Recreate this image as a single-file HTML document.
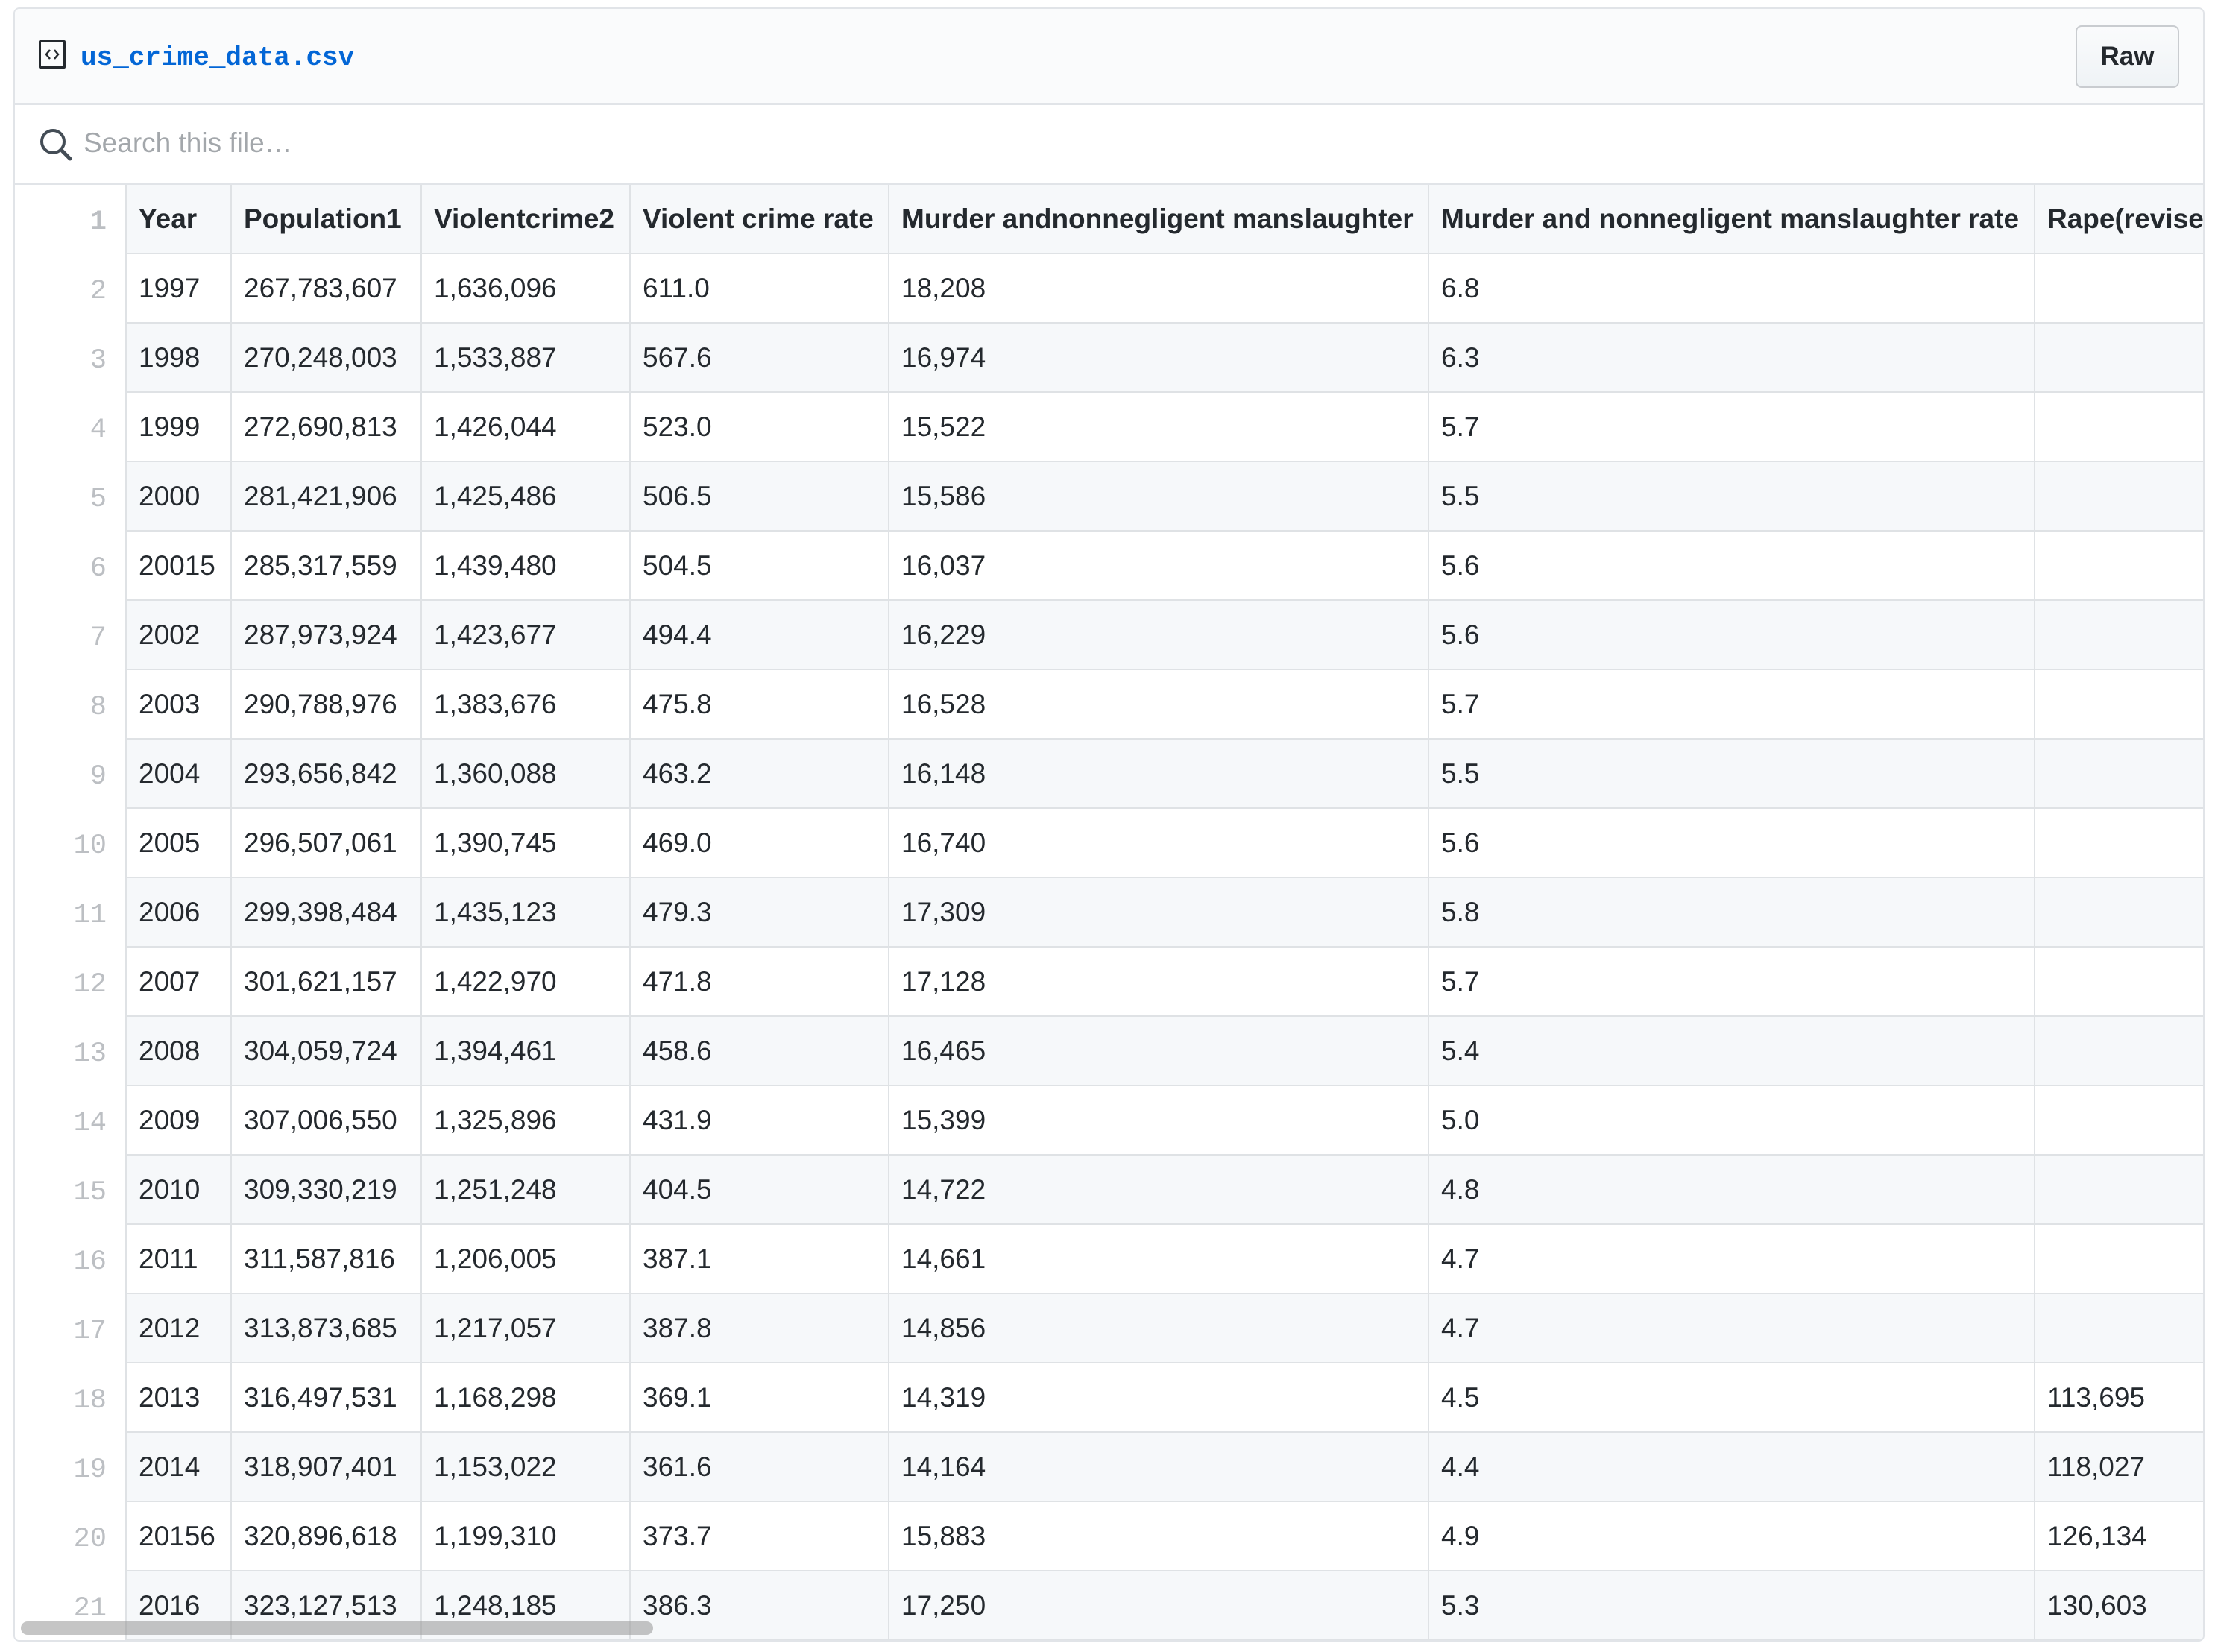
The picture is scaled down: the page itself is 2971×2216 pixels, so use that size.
<!DOCTYPE html>
<html><head><meta charset="utf-8"><style>
html,body{margin:0;padding:0;background:#fff;width:2971px;height:2216px;overflow:hidden;font-family:"Liberation Sans",Arial,sans-serif;color:#24292e}
.box{position:absolute;left:18px;top:10px;width:2935px;height:2188px;border:2px solid #e1e4e8;border-radius:8px;overflow:hidden;background:#fff}
.hdr{position:absolute;left:0;top:0;right:0;height:126px;background:#fafbfc;border-bottom:3px solid #e1e4e8}
.fn{position:absolute;left:88px;top:45px;font-family:"Liberation Mono",monospace;font-weight:bold;font-size:36px;color:#0366d6}
.ico{position:absolute;left:32px;top:42px;border:3px solid #24292e;border-radius:2px;width:30px;height:32px}
.raw{position:absolute;left:2764px;top:22px;width:135px;height:80px;border:2px solid #c9ccd0;border-radius:8px;background:linear-gradient(#fafbfc,#eff3f6);font-weight:bold;font-size:35px;text-align:center;line-height:80px;color:#24292e}
.search{position:absolute;left:0;top:129px;right:0;height:104px;background:#fff}
.ph{position:absolute;left:92px;top:30px;font-size:37px;color:#a3a7ab}
table{position:absolute;left:0;top:233px;border-collapse:collapse;table-layout:fixed;width:3200px}
td{height:91px;border:2px solid #dfe2e5;font-size:37px;line-height:40px;padding:0 0 0 16px;white-space:nowrap;overflow:hidden;vertical-align:middle}
td.n{height:83px;border:none;border-right:2px solid #dfe2e5;text-align:right;padding:8px 25px 0 0;font-family:"Liberation Mono",monospace;font-size:37px;color:#bcbfc3;background:#fff!important}
tr.g td{background:#f6f8fa}
tr.h td{font-weight:bold}
tr:first-child td{border-top:3px solid #e1e4e8}
.sb{position:absolute;left:8px;top:2163px;width:848px;height:18px;border-radius:9px;background:rgba(150,150,150,.55)}
</style></head><body>
<div class="box">
 <div class="hdr">
  <div class="ico"><svg width="30" height="32" viewBox="0 0 30 32" style="position:absolute;left:0;top:0"><path d="M12 10 L7 16 L12 22 M18 10 L23 16 L18 22" stroke="#24292e" stroke-width="2.5" fill="none"/></svg></div>
  <div class="fn">us_crime_data.csv</div>
  <div class="raw">Raw</div>
 </div>
 <div class="search">
  <svg style="position:absolute;left:32px;top:30px" width="48" height="48" viewBox="0 0 48 48"><circle cx="19" cy="19" r="15" stroke="#444d56" stroke-width="4" fill="none"/><path d="M30 30 L42 42" stroke="#444d56" stroke-width="5" stroke-linecap="round"/></svg>
  <div class="ph">Search this file…</div>
 </div>
 <table>
 <colgroup><col style="width:149px"><col style="width:141px"><col style="width:255px"><col style="width:280px"><col style="width:347px"><col style="width:724px"><col style="width:813px"><col style="width:491px"></colgroup>
 <tr class="g h"><td class="n">1</td><td>Year</td><td>Population1</td><td>Violentcrime2</td><td>Violent crime rate</td><td>Murder andnonnegligent manslaughter</td><td>Murder and nonnegligent manslaughter rate</td><td>Rape(revised definition)</td></tr>
 <tr><td class="n">2</td><td>1997</td><td>267,783,607</td><td>1,636,096</td><td>611.0</td><td>18,208</td><td>6.8</td><td></td></tr>
 <tr class="g"><td class="n">3</td><td>1998</td><td>270,248,003</td><td>1,533,887</td><td>567.6</td><td>16,974</td><td>6.3</td><td></td></tr>
 <tr><td class="n">4</td><td>1999</td><td>272,690,813</td><td>1,426,044</td><td>523.0</td><td>15,522</td><td>5.7</td><td></td></tr>
 <tr class="g"><td class="n">5</td><td>2000</td><td>281,421,906</td><td>1,425,486</td><td>506.5</td><td>15,586</td><td>5.5</td><td></td></tr>
 <tr><td class="n">6</td><td>20015</td><td>285,317,559</td><td>1,439,480</td><td>504.5</td><td>16,037</td><td>5.6</td><td></td></tr>
 <tr class="g"><td class="n">7</td><td>2002</td><td>287,973,924</td><td>1,423,677</td><td>494.4</td><td>16,229</td><td>5.6</td><td></td></tr>
 <tr><td class="n">8</td><td>2003</td><td>290,788,976</td><td>1,383,676</td><td>475.8</td><td>16,528</td><td>5.7</td><td></td></tr>
 <tr class="g"><td class="n">9</td><td>2004</td><td>293,656,842</td><td>1,360,088</td><td>463.2</td><td>16,148</td><td>5.5</td><td></td></tr>
 <tr><td class="n">10</td><td>2005</td><td>296,507,061</td><td>1,390,745</td><td>469.0</td><td>16,740</td><td>5.6</td><td></td></tr>
 <tr class="g"><td class="n">11</td><td>2006</td><td>299,398,484</td><td>1,435,123</td><td>479.3</td><td>17,309</td><td>5.8</td><td></td></tr>
 <tr><td class="n">12</td><td>2007</td><td>301,621,157</td><td>1,422,970</td><td>471.8</td><td>17,128</td><td>5.7</td><td></td></tr>
 <tr class="g"><td class="n">13</td><td>2008</td><td>304,059,724</td><td>1,394,461</td><td>458.6</td><td>16,465</td><td>5.4</td><td></td></tr>
 <tr><td class="n">14</td><td>2009</td><td>307,006,550</td><td>1,325,896</td><td>431.9</td><td>15,399</td><td>5.0</td><td></td></tr>
 <tr class="g"><td class="n">15</td><td>2010</td><td>309,330,219</td><td>1,251,248</td><td>404.5</td><td>14,722</td><td>4.8</td><td></td></tr>
 <tr><td class="n">16</td><td>2011</td><td>311,587,816</td><td>1,206,005</td><td>387.1</td><td>14,661</td><td>4.7</td><td></td></tr>
 <tr class="g"><td class="n">17</td><td>2012</td><td>313,873,685</td><td>1,217,057</td><td>387.8</td><td>14,856</td><td>4.7</td><td></td></tr>
 <tr><td class="n">18</td><td>2013</td><td>316,497,531</td><td>1,168,298</td><td>369.1</td><td>14,319</td><td>4.5</td><td>113,695</td></tr>
 <tr class="g"><td class="n">19</td><td>2014</td><td>318,907,401</td><td>1,153,022</td><td>361.6</td><td>14,164</td><td>4.4</td><td>118,027</td></tr>
 <tr><td class="n">20</td><td>20156</td><td>320,896,618</td><td>1,199,310</td><td>373.7</td><td>15,883</td><td>4.9</td><td>126,134</td></tr>
 <tr class="g"><td class="n">21</td><td>2016</td><td>323,127,513</td><td>1,248,185</td><td>386.3</td><td>17,250</td><td>5.3</td><td>130,603</td></tr>
 </table>
 <div class="sb"></div>
</div>
</body></html>
